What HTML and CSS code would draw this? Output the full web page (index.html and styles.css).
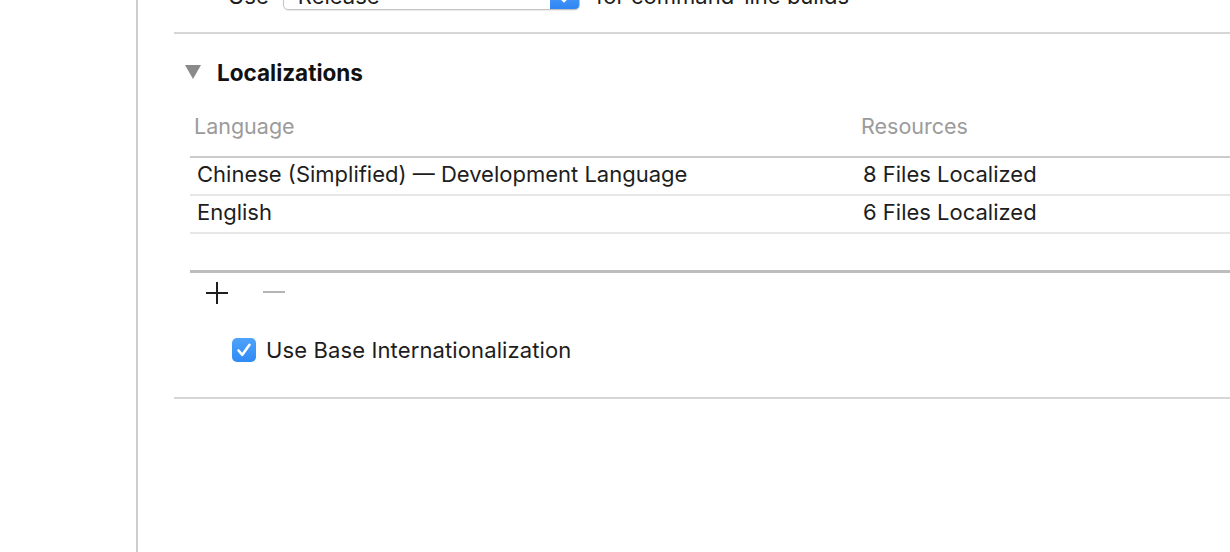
FILE: index.html
```html
<!DOCTYPE html>
<html lang="en">
<head>
<meta charset="utf-8">
<title>Localizations</title>
<link rel="stylesheet" href="styles.css">
</head>
<body>
<div class="window">
  <aside class="sidebar"></aside>
  <main class="main">
    <div class="build-row">
      <span class="build-label">Use</span>
      <div class="popup">
        <span class="popup-value">Release</span>
        <span class="popup-arrows">
          <svg width="12" height="16" viewBox="0 0 12 16"><path d="M3 5.5 L6 2.5 L9 5.5 M3 10.5 L6 13.5 L9 10.5" fill="none" stroke="#fff" stroke-width="1.8" stroke-linecap="round" stroke-linejoin="round"/></svg>
        </span>
      </div>
      <span class="build-label">for command-line builds</span>
    </div>
    <div class="separator"></div>

    <div class="section-head">
      <svg class="disclosure" width="16" height="14" viewBox="0 0 16 14"><path d="M0 0 H16 L8 14 Z" fill="#8a8a8a"/></svg>
      <span class="section-title">Localizations</span>
    </div>

    <div class="table">
      <div class="thead">
        <div class="th th-lang">Language</div>
        <div class="th th-res">Resources</div>
      </div>
      <div class="tr">
        <div class="td td-lang">Chinese (Simplified) — Development Language</div>
        <div class="td td-res">8 Files Localized</div>
      </div>
      <div class="tr">
        <div class="td td-lang">English</div>
        <div class="td td-res">6 Files Localized</div>
      </div>
      <div class="tr tr-empty">
        <div class="td td-lang"></div>
        <div class="td td-res"></div>
      </div>
    </div>

    <div class="table-actions">
      <svg class="action-add" width="22" height="22" viewBox="0 0 22 22"><path d="M11 0 V22 M0 11 H22" stroke="#1e1e1e" stroke-width="2"/></svg>
      <svg class="action-remove" width="22" height="22" viewBox="0 0 22 22"><path d="M0 10 H22" stroke="#b4b4b4" stroke-width="2"/></svg>
    </div>

    <label class="check-row">
      <span class="checkbox">
        <svg width="24" height="24" viewBox="0 0 24 24"><path d="M6.5 12.5 L10.3 16.8 L17.5 6.8" fill="none" stroke="#fff" stroke-width="2.6" stroke-linecap="round" stroke-linejoin="round"/></svg>
      </span>
      <span class="check-label">Use Base Internationalization</span>
    </label>

    <div class="separator separator-bottom"></div>
  </main>
</div>
</body>
</html>
```

FILE: styles.css
```css
* { box-sizing: border-box; }

html, body {
  margin: 0;
  padding: 0;
  background: #ffffff;
  overflow: hidden;
}

body {
  font-family: "Inter", "Liberation Sans", sans-serif;
  font-size: 22px;
  color: #1d1d1d;
}

.window {
  display: flex;
  width: 1230px;
  height: 552px;
}

.sidebar {
  width: 138px;
  flex: none;
  border-right: 2px solid #cdcdcd;
}

.main {
  flex: 1;
  padding-left: 36px;
  display: flex;
  flex-direction: column;
}

/* top (partially scrolled) row */
.build-row {
  display: flex;
  align-items: center;
  height: 28px;
  margin-top: -18px;
  padding-left: 54px;
}

.build-label {
  line-height: 28px;
}

.popup {
  display: flex;
  align-items: center;
  width: 297px;
  height: 28px;
  margin: 0 16px 0 14px;
  border: 1px solid #c4c4c4;
  border-radius: 5px;
  overflow: hidden;
  box-shadow: 0 1px 1px rgba(0,0,0,0.08);
}

.popup-value {
  flex: 1;
  padding-left: 14px;
}

.popup-arrows {
  width: 29px;
  height: 100%;
  display: flex;
  align-items: center;
  justify-content: center;
  background: linear-gradient(#5aa6f9, #2f86f4);
}

.separator {
  height: 2px;
  background: #d6d6d6;
  margin-top: 22px;
}

.section-head {
  display: flex;
  align-items: center;
  height: 26px;
  margin-top: 25px;
  padding-left: 11px;
}

.disclosure {
  flex: none;
  margin-right: 16px;
}

.section-title {
  font-weight: 700;
  font-size: 22.5px;
  color: #111;
}

/* table */
.table {
  margin-left: 16px;
  margin-top: 21px;
}

.thead,
.tr {
  display: grid;
  grid-template-columns: 667px 1fr;
}

.thead {
  height: 52px;
  border-bottom: 2px solid #cbcbcb;
}

.th {
  color: #9b9b9b;
  line-height: 40px;
  font-size: 21.5px;
}

.th-lang { padding-left: 4px; }
.th-res { padding-left: 4px; }

.tr {
  height: 38px;
  border-bottom: 2px solid #e7e7e7;
  align-items: start;
}

.td {
  line-height: 33px;
  white-space: nowrap;
}

.td-lang { padding-left: 7px; }
.td-res { padding-left: 6px; }

.tr-empty {
  border-bottom: 3px solid #bdbdbd;
  height: 39px;
}

.table-actions {
  display: flex;
  align-items: center;
  height: 22px;
  margin-top: 9px;
  padding-left: 32px;
}

.action-remove {
  margin-left: 35px;
}

.check-row {
  display: flex;
  align-items: center;
  margin-top: 34px;
  padding-left: 58px;
  height: 24px;
}

.checkbox {
  width: 24px;
  height: 24px;
  border-radius: 5px;
  background: linear-gradient(#4ea3fa, #2f8af5);
  display: flex;
  flex: none;
}

.check-label {
  margin-left: 10px;
  letter-spacing: 0.12px;
}

.separator-bottom {
  margin-top: 35px;
}
```
